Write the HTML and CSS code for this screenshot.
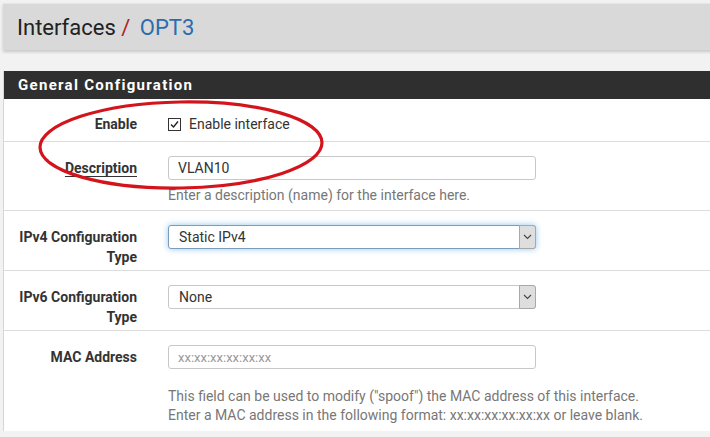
FILE: index.html
```html
<!DOCTYPE html>
<html lang="en">
<head>
  <meta charset="UTF-8">
  <title>Interfaces / OPT3</title>
  <link rel="stylesheet" href="styles.css">
</head>
<body>

<div class="page">
  <header class="breadcrumb-bar">
    <h1>Interfaces <span class="sep">/</span> <span class="current">OPT3</span></h1>
  </header>

  <!-- General Configuration -->
  <section class="panel">
    <h2 class="panel-heading">General Configuration</h2>

    <div class="panel-body">
      <div class="form-group row-enable">
        <label class="field-label">Enable</label>
        <div class="field">
          <span class="checkbox">
            <span class="box">
              <svg width="11" height="11" viewBox="0 0 11 11"><path d="M2 5.5 L4.5 8 L9 2.5" fill="none" stroke="#222" stroke-width="1.4"/></svg>
            </span>
            Enable interface
          </span>
        </div>
      </div>

      <div class="form-group">
        <label class="field-label"><span class="required">Description</span></label>
        <div class="field">
          <input type="text" class="form-field" value="VLAN10">
          <p class="help">Enter a description (name) for the interface here.</p>
        </div>
      </div>

      <div class="form-group">
        <label class="field-label">IPv4 Configuration Type</label>
        <div class="field">
          <div class="select focused">
            <span>Static IPv4</span>
            <span class="arrow"><svg width="9" height="6" viewBox="0 0 9 6"><path d="M1 1 L4.5 4.5 L8 1" fill="none" stroke="#444" stroke-width="1.1"/></svg></span>
          </div>
        </div>
      </div>

      <div class="form-group">
        <label class="field-label">IPv6 Configuration Type</label>
        <div class="field">
          <div class="select">
            <span>None</span>
            <span class="arrow"><svg width="9" height="6" viewBox="0 0 9 6"><path d="M1 1 L4.5 4.5 L8 1" fill="none" stroke="#444" stroke-width="1.1"/></svg></span>
          </div>
        </div>
      </div>

      <div class="form-group row-mac">
        <label class="field-label">MAC Address</label>
        <div class="field">
          <input type="text" class="form-field mac" placeholder="xx:xx:xx:xx:xx:xx">
          <p class="help spaced">This field can be used to modify ("spoof") the MAC address of this interface.<br>
            Enter a MAC address in the following format: xx:xx:xx:xx:xx:xx or leave blank.</p>
        </div>
      </div>
    </div>
  </section>

  <!-- red marker drawn on the screenshot -->
  <svg class="marker" width="292" height="96" viewBox="0 0 292 96">
    <ellipse cx="146" cy="48" rx="141" ry="43" fill="none" stroke="#d4141c" stroke-width="3.2" transform="rotate(-1 146 48)"/>
  </svg>
</div>

</body>
</html>
```

FILE: styles.css
```css
html, body {
  margin: 0;
  padding: 0;
  overflow: hidden;
}
body {
  font-family: 'Roboto', 'Liberation Sans', sans-serif;
  background: #f2f2f2;
  color: #333;
}
.page {
  position: relative;
  padding: 3px 0 0 3px;
  width: 740px;
}
.breadcrumb-bar {
  background: #d9d9d9;
  height: 47px;
  display: flex;
  align-items: center;
  padding-left: 14px;
  box-shadow: 0 2px 3px rgba(0, 0, 0, 0.18);
  border-top: 1px solid #e6e6e6;
  box-sizing: border-box;
}
.breadcrumb-bar h1 {
  margin: 0;
  font-size: 22px;
  font-weight: 400;
  color: #222;
}
.breadcrumb-bar .sep {
  color: #b0202a;
}
.breadcrumb-bar .current {
  color: #2b6cae;
  margin-left: 4px;
}
.panel {
  margin-top: 21px;
  background: #fff;
  border-left: 1px solid #d6d6d6;
}
.panel-heading {
  margin: 0;
  background: #2f2f2f;
  color: #fff;
  font-size: 15px;
  font-weight: 700;
  letter-spacing: 1.3px;
  height: 28px;
  line-height: 29px;
  padding-left: 14px;
}
.form-group {
  display: grid;
  grid-template-columns: 133px 1fr;
  column-gap: 31px;
  padding: 14px 0 5px;
  border-top: 1px solid #dcdcdc;
}
.panel-body .form-group:first-child {
  border-top: none;
  padding: 15px 0 7px;
}
.form-group.row-mac {
  padding-bottom: 6px;
}
.field-label {
  text-align: right;
  font-size: 14px;
  font-weight: 700;
  line-height: 20px;
  padding-top: 2px;
  margin-bottom: -2px;
  color: #333;
}
.row-enable .field-label {
  padding-top: 0;
  margin-bottom: 0;
}
.required {
  text-decoration: underline;
  text-underline-offset: 3px;
}
.checkbox {
  display: flex;
  align-items: center;
  gap: 8px;
  font-size: 14px;
  line-height: 20px;
  color: #333;
}
.checkbox .box {
  width: 11px;
  height: 11px;
  border: 1px solid #333;
  background: #fff;
  display: flex;
}
.form-field {
  width: 368px;
  height: 24px;
  box-sizing: border-box;
  border: 1px solid #c8c8c8;
  border-radius: 3px;
  padding: 0 9px;
  font-family: inherit;
  font-size: 14px;
  color: #333;
  display: block;
}
.form-field.mac::placeholder {
  color: #999;
  font-size: 13px;
}
.help {
  margin: 6px 0 0;
  font-size: 14px;
  line-height: 19px;
  color: #777;
  white-space: nowrap;
}
.help.spaced {
  margin-top: 18px;
}
.select {
  position: relative;
  width: 368px;
  height: 24px;
  box-sizing: border-box;
  border: 1px solid #c8c8c8;
  border-radius: 3px;
  padding-left: 10px;
  font-size: 14px;
  line-height: 22px;
  color: #333;
  background: #fff;
}
.select.focused {
  border-color: #7a9cbd;
  box-shadow: 0 0 6px rgba(102, 175, 233, 0.7);
}
.select .arrow {
  position: absolute;
  top: -1px;
  right: -1px;
  width: 17px;
  height: 24px;
  box-sizing: border-box;
  background: #dedede;
  border: 1px solid #a8a8a8;
  border-radius: 0 3px 3px 0;
  display: flex;
  align-items: center;
  justify-content: center;
}
.marker {
  position: absolute;
  left: 35px;
  top: 97px;
}
```
